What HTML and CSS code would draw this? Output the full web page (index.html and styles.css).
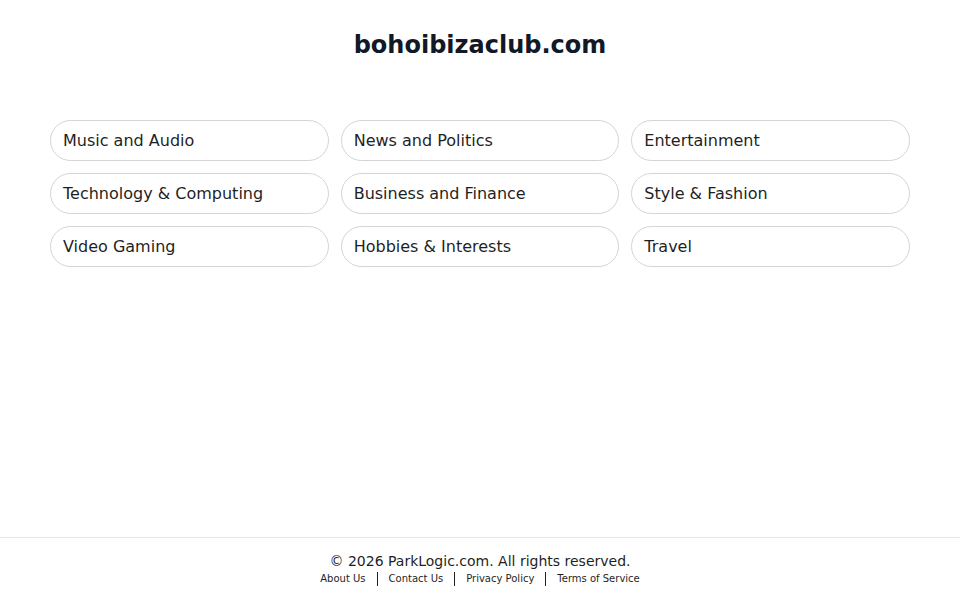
FILE: index.html
```html
<!DOCTYPE html>
<html lang="en">
  <head>
    <meta charset="UTF-8" />
    <meta name="viewport" content="width=device-width, initial-scale=1.0" />
    <title>bohoibizaclub.com</title>
    <link rel="stylesheet" href="styles.css">
  </head>
  <body>
    <div class="page">
      <header class="site-header">
        <h1>bohoibizaclub.com</h1>
      </header>

      <!-- Related search categories -->
      <main class="topics">
        <a class="topic" href="#">Music and Audio</a>
        <a class="topic" href="#">News and Politics</a>
        <a class="topic" href="#">Entertainment</a>
        <a class="topic" href="#">Technology &amp; Computing</a>
        <a class="topic" href="#">Business and Finance</a>
        <a class="topic" href="#">Style &amp; Fashion</a>
        <a class="topic" href="#">Video Gaming</a>
        <a class="topic" href="#">Hobbies &amp; Interests</a>
        <a class="topic" href="#">Travel</a>
      </main>

      <footer class="site-footer">
        <p class="copyright">&copy; 2026 ParkLogic.com. All rights reserved.</p>
        <nav class="footer-links">
          <a href="#">About Us</a>
          <span class="sep"></span>
          <a href="#">Contact Us</a>
          <span class="sep"></span>
          <a href="#">Privacy Policy</a>
          <span class="sep"></span>
          <a href="#">Terms of Service</a>
        </nav>
      </footer>
    </div>
  </body>
</html>
```

FILE: styles.css
```css
body {
  margin: 0;
  font-family: "DejaVu Sans", sans-serif;
  color: #1f1f1f;
  background: #fff;
}

.page {
  display: flex;
  flex-direction: column;
  min-height: 100vh;
}

.site-header {
  padding-top: 30px;
  text-align: center;
}

.site-header h1 {
  margin: 0;
  font-size: 24px;
  line-height: 30px;
  font-weight: 700;
  color: #111827;
}

.topics {
  flex: 1;
  display: grid;
  grid-template-columns: repeat(3, 1fr);
  grid-auto-rows: 41px;
  gap: 12px;
  align-content: start;
  padding: 60px 50px 0;
}

.topic {
  display: flex;
  align-items: center;
  padding: 0 12px;
  border: 1px solid #d4d4d4;
  border-radius: 21px;
  font-size: 16px;
  color: #1f1f1f;
  text-decoration: none;
}

.topic:hover {
  background: #f7f7f7;
}

.site-footer {
  border-top: 1px solid #e5e5e5;
  padding: 15px 0 14px;
  text-align: center;
}

.copyright {
  margin: 0;
  font-size: 14px;
  line-height: 17px;
  color: #1f1f1f;
}

.footer-links {
  display: flex;
  justify-content: center;
  align-items: center;
  margin-top: 1px;
  font-size: 10px;
  line-height: 15px;
}

.footer-links a {
  color: #1f1f1f;
  text-decoration: none;
}

.footer-links .sep {
  width: 1px;
  height: 14px;
  margin: 0 11px;
  background: #1f1f1f;
}
```
